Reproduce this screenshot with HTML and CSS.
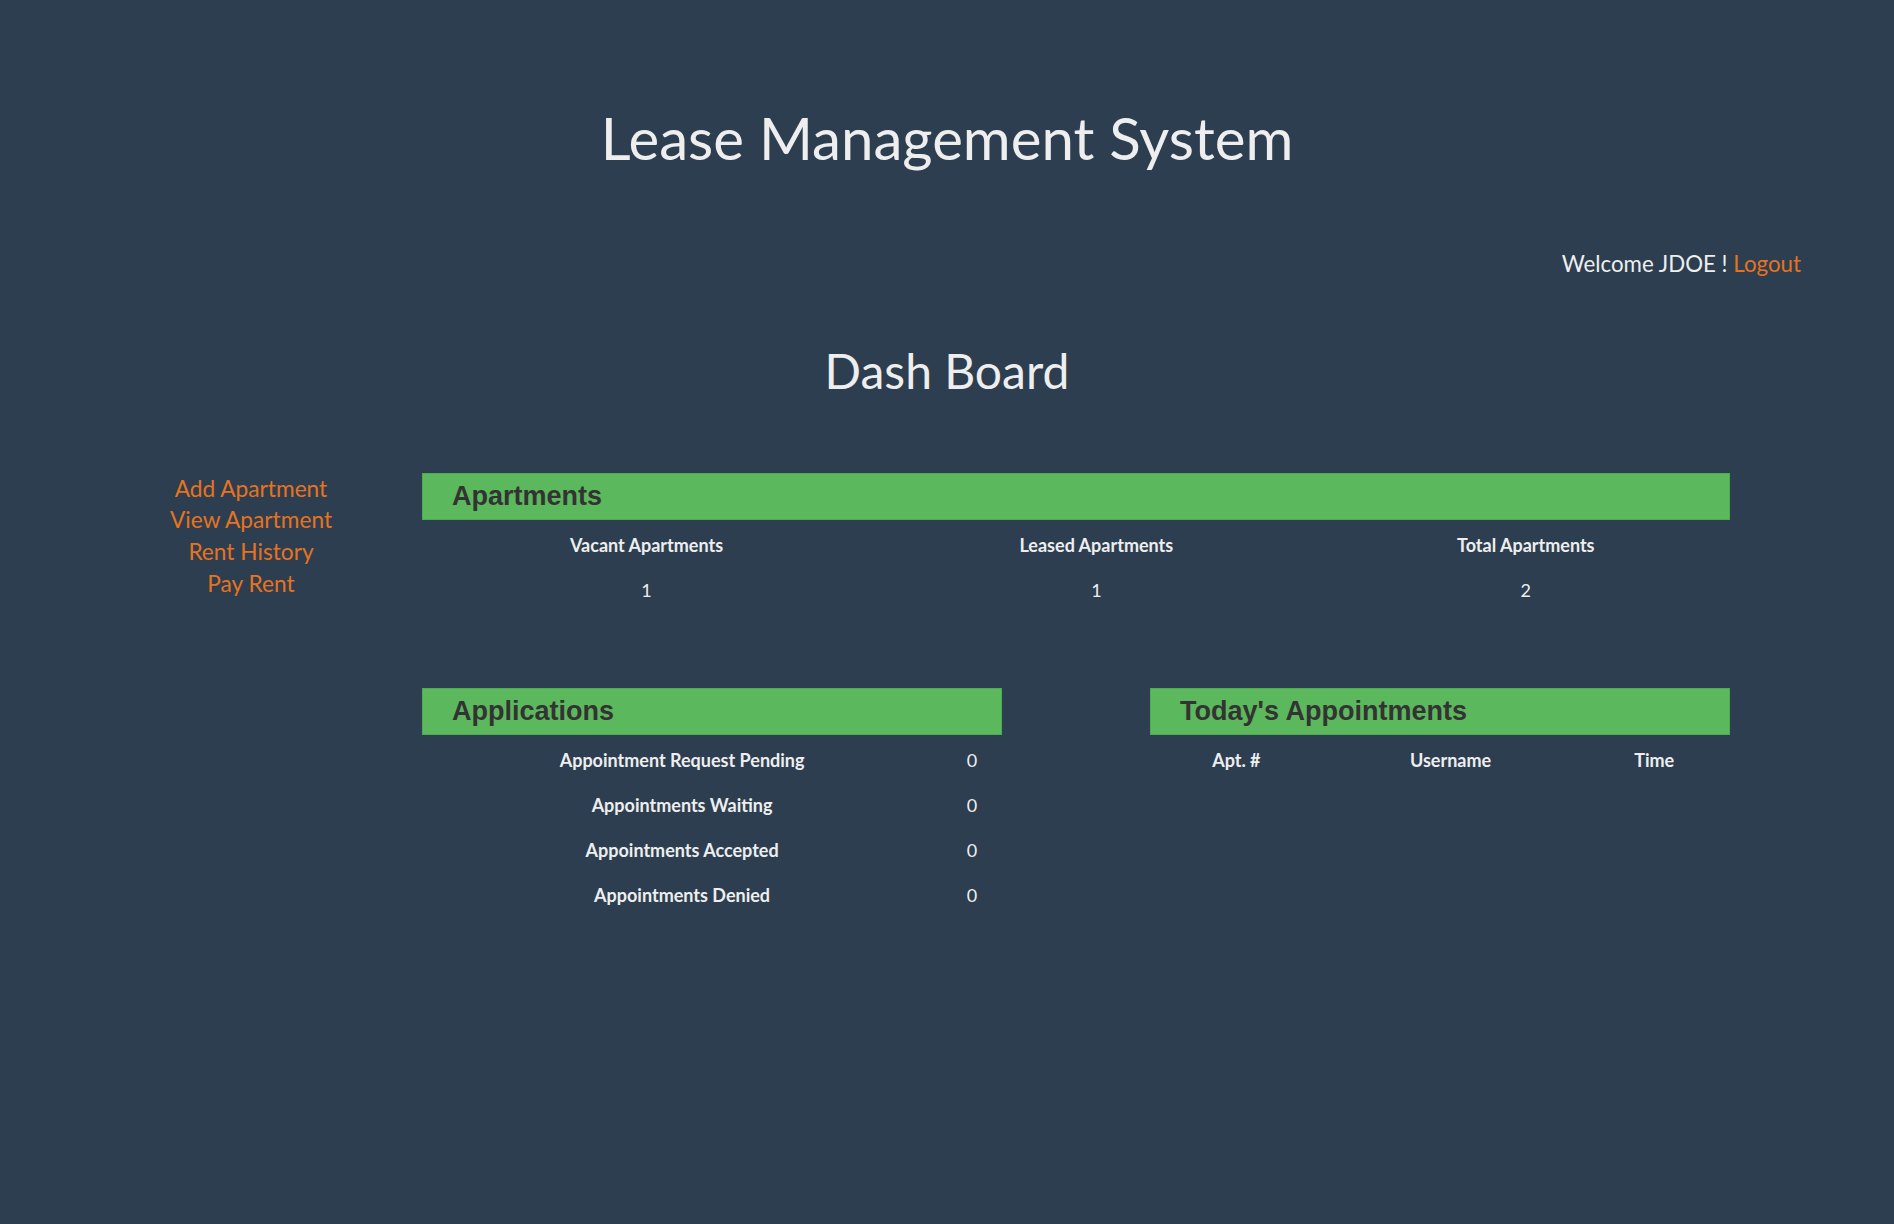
FILE: index.html
```html
<!DOCTYPE html>
<html>
<head>
<meta charset="utf-8">
<title>Lease Management System</title>
<link rel="stylesheet" href="styles.css">
</head>
<body>
<header class="site-header">
  <h1 class="site-title">Lease Management System</h1>
</header>
<div class="welcome">Welcome JDOE ! <a class="link" href="#">Logout</a></div>
<h2 class="page-title">Dash Board</h2>
<div class="layout">
  <nav class="sidebar">
    <a class="link" href="#">Add Apartment</a>
    <a class="link" href="#">View Apartment</a>
    <a class="link" href="#">Rent History</a>
    <a class="link" href="#">Pay Rent</a>
  </nav>
  <main class="main">
    <section class="panel">
      <h3 class="panel-head">Apartments</h3>
      <table class="data">
        <tr><th>Vacant Apartments</th><th>Leased Apartments</th><th>Total Apartments</th></tr>
        <tr><td>1</td><td>1</td><td>2</td></tr>
      </table>
    </section>
    <div class="split">
      <section class="panel half">
        <h3 class="panel-head">Applications</h3>
        <table class="data">
          <tr><th>Appointment Request Pending</th><td class="val">0</td></tr>
          <tr><th>Appointments Waiting</th><td class="val">0</td></tr>
          <tr><th>Appointments Accepted</th><td class="val">0</td></tr>
          <tr><th>Appointments Denied</th><td class="val">0</td></tr>
        </table>
      </section>
      <section class="panel half">
        <h3 class="panel-head">Today's Appointments</h3>
        <table class="data">
          <tr><th>Apt. #</th><th>Username</th><th>Time</th></tr>
        </table>
      </section>
    </div>
  </main>
</div>
</body>
</html>
```
FILE: styles.css
```css
html, body {
  margin: 0;
  padding: 0;
}
body {
  background: #2c3e50;
  color: #ecf0f1;
  font-family: Lato, "Open Sans", sans-serif;
  min-height: 1224px;
}
.site-header {
  padding-top: 99px;
}
.site-title {
  margin: 0;
  text-align: center;
  font-weight: 400;
  font-size: 58.2px;
  line-height: 78px;
  color: #eeeeee;
}
.welcome {
  margin-top: 71.5px;
  text-align: right;
  padding-right: 93px;
  font-size: 22.3px;
  line-height: 30px;
  color: #eeeeee;
}
.link {
  color: #e6731f;
  text-decoration: none;
}
.page-title {
  margin: 62px 0 0;
  text-align: center;
  font-weight: 400;
  font-size: 48px;
  line-height: 60px;
  color: #eeeeee;
}
.layout {
  display: flex;
  margin-top: 72px;
  padding-left: 80px;
}
.sidebar {
  width: 342px;
  display: flex;
  flex-direction: column;
  align-items: center;
  font-size: 22.7px;
  line-height: 31.7px;
}
.main {
  width: 1308px;
}
.panel-head {
  margin: 0;
  height: 45px;
  box-sizing: content-box;
  background: #5cb85c;
  border: 1px solid #4cae4c;
  color: #333333;
  font-family: "Liberation Sans", Arial, sans-serif;
  font-weight: 700;
  font-size: 27px;
  line-height: 45px;
  padding-left: 29px;
}
.data {
  width: 100%;
  border-collapse: collapse;
  margin-top: 3px;
}
.data th, .data td {
  padding: 10px 10px;
  line-height: 25px;
  font-size: 18px;
  text-align: center;
  color: #eeeeee;
}
.data th {
  font-weight: 700;
}
.data td {
  font-weight: 400;
}
.split {
  display: flex;
  justify-content: space-between;
  margin-top: 75px;
}
.half {
  width: 580px;
}
```
